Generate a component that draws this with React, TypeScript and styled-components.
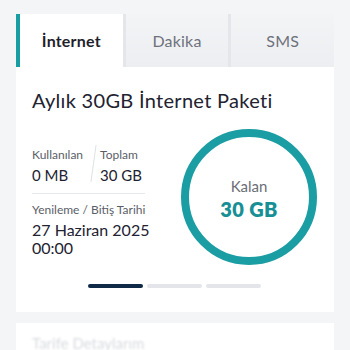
import React from "react";
import styled, { createGlobalStyle } from "styled-components";

const Global = createGlobalStyle`
  html, body { margin: 0; padding: 0; background: #f4f5f7; }
  body { font-family: "Lato", "Noto Sans", sans-serif; color: #23232d; }
  * { box-sizing: border-box; }
`;

const Page = styled.div`
  width: 350px;
  height: 350px;
  overflow: hidden;
  padding: 14px 16px 0;
  display: flex;
  flex-direction: column;
  & > * { flex-shrink: 0; }
`;

const Tabs = styled.div`
  display: flex;
  height: 53px;
  gap: 3px;
  background: #e4e6ea;
`;

const Tab = styled.div<{ $active?: boolean }>`
  flex: 1;
  display: flex;
  align-items: center;
  justify-content: center;
  font-size: 16px;
  letter-spacing: 0.2px;
  font-weight: ${(p) => (p.$active ? 700 : 400)};
  color: ${(p) => (p.$active ? "#1f1f2b" : "#6e717b")};
  background: ${(p) => (p.$active ? "#ffffff" : "linear-gradient(#f3f4f6, #eceef1)")};
  border-left: ${(p) => (p.$active ? "4px solid #179ea2" : "none")};
`;

const Card = styled.div`
  background: #ffffff;
  padding: 20px 17px 24px 16px;
  display: flex;
  flex-direction: column;
`;

const Title = styled.div`
  font-size: 20px;
  line-height: 26px;
  letter-spacing: 0.3px;
  color: #222230;
`;

const Body = styled.div`
  display: flex;
  justify-content: space-between;
  margin-top: 16px;
`;

const Left = styled.div`
  width: 113px;
  display: flex;
  flex-direction: column;
  padding-top: 18px;
`;

const Stats = styled.div`
  display: flex;
  align-items: flex-start;
  padding-bottom: 8px;
  border-bottom: 1px solid #e6e8ec;
`;

const Stat = styled.div`
  display: flex;
  flex-direction: column;
`;

const Slash = styled.div`
  width: 1px;
  height: 37px;
  background: #dfe1e5;
  margin: -2px 6px 0 10px;
  transform: rotate(8deg);
`;

const Label = styled.div`
  font-size: 12px;
  line-height: 16px;
  color: #5b5e68;
  white-space: nowrap;
`;

const Value = styled.div`
  font-size: 15px;
  line-height: 20px;
  margin-top: 2px;
  color: #222230;
`;

const Renew = styled.div`
  margin-top: 8px;
  display: flex;
  flex-direction: column;
`;

const DateText = styled.div`
  font-size: 16px;
  line-height: 18px;
  margin-top: 3px;
  color: #222230;
  white-space: nowrap;
`;

const Gauge = styled.div`
  position: relative;
  width: 136px;
  height: 136px;
`;

const GaugeCenter = styled.div`
  position: absolute;
  inset: 0;
  display: flex;
  flex-direction: column;
  align-items: center;
  justify-content: center;
  padding-top: 4px;
`;

const GaugeLabel = styled.div`
  font-size: 15px;
  line-height: 18px;
  color: #6a6d76;
`;

const GaugeValue = styled.div`
  font-size: 20px;
  line-height: 24px;
  font-weight: 800;
  letter-spacing: 0.4px;
  color: #188f95;
  margin-top: 2px;
`;

const Dots = styled.div`
  display: flex;
  justify-content: center;
  gap: 4px;
  margin-top: 19px;
`;

const Dot = styled.div<{ $active?: boolean }>`
  width: 55px;
  height: 4px;
  border-radius: 2px;
  background: ${(p) => (p.$active ? "#0e2a47" : "#e3e5ea")};
`;

const Card2 = styled.div`
  margin-top: 11px;
  background: #ffffff;
  height: 60px;
  padding: 11px 16px;
`;

const Faded = styled.div`
  font-size: 15px;
  line-height: 18px;
  color: #d9dbe0;
  filter: blur(0.8px);
`;

export default function App() {
  return (
    <>
      <Global />
      <Page>
        <Tabs>
          <Tab $active>İnternet</Tab>
          <Tab>Dakika</Tab>
          <Tab>SMS</Tab>
        </Tabs>
        <Card>
          <Title>Aylık 30GB İnternet Paketi</Title>
          <Body>
            <Left>
              <Stats>
                <Stat>
                  <Label>Kullanılan</Label>
                  <Value>0 MB</Value>
                </Stat>
                <Slash />
                <Stat>
                  <Label>Toplam</Label>
                  <Value>30 GB</Value>
                </Stat>
              </Stats>
              <Renew>
                <Label>Yenileme / Bitiş Tarihi</Label>
                <DateText>
                  27 Haziran 2025
                  <br />
                  00:00
                </DateText>
              </Renew>
            </Left>
            <Gauge>
              <svg width="136" height="136" viewBox="0 0 136 136">
                <circle cx="68" cy="68" r="64" fill="none" stroke="#1a9da3" strokeWidth="8" />
              </svg>
              <GaugeCenter>
                <GaugeLabel>Kalan</GaugeLabel>
                <GaugeValue>30 GB</GaugeValue>
              </GaugeCenter>
            </Gauge>
          </Body>
          <Dots>
            <Dot $active />
            <Dot />
            <Dot />
          </Dots>
        </Card>
        <Card2>
          <Faded>Tarife Detaylarım</Faded>
        </Card2>
      </Page>
    </>
  );
}
